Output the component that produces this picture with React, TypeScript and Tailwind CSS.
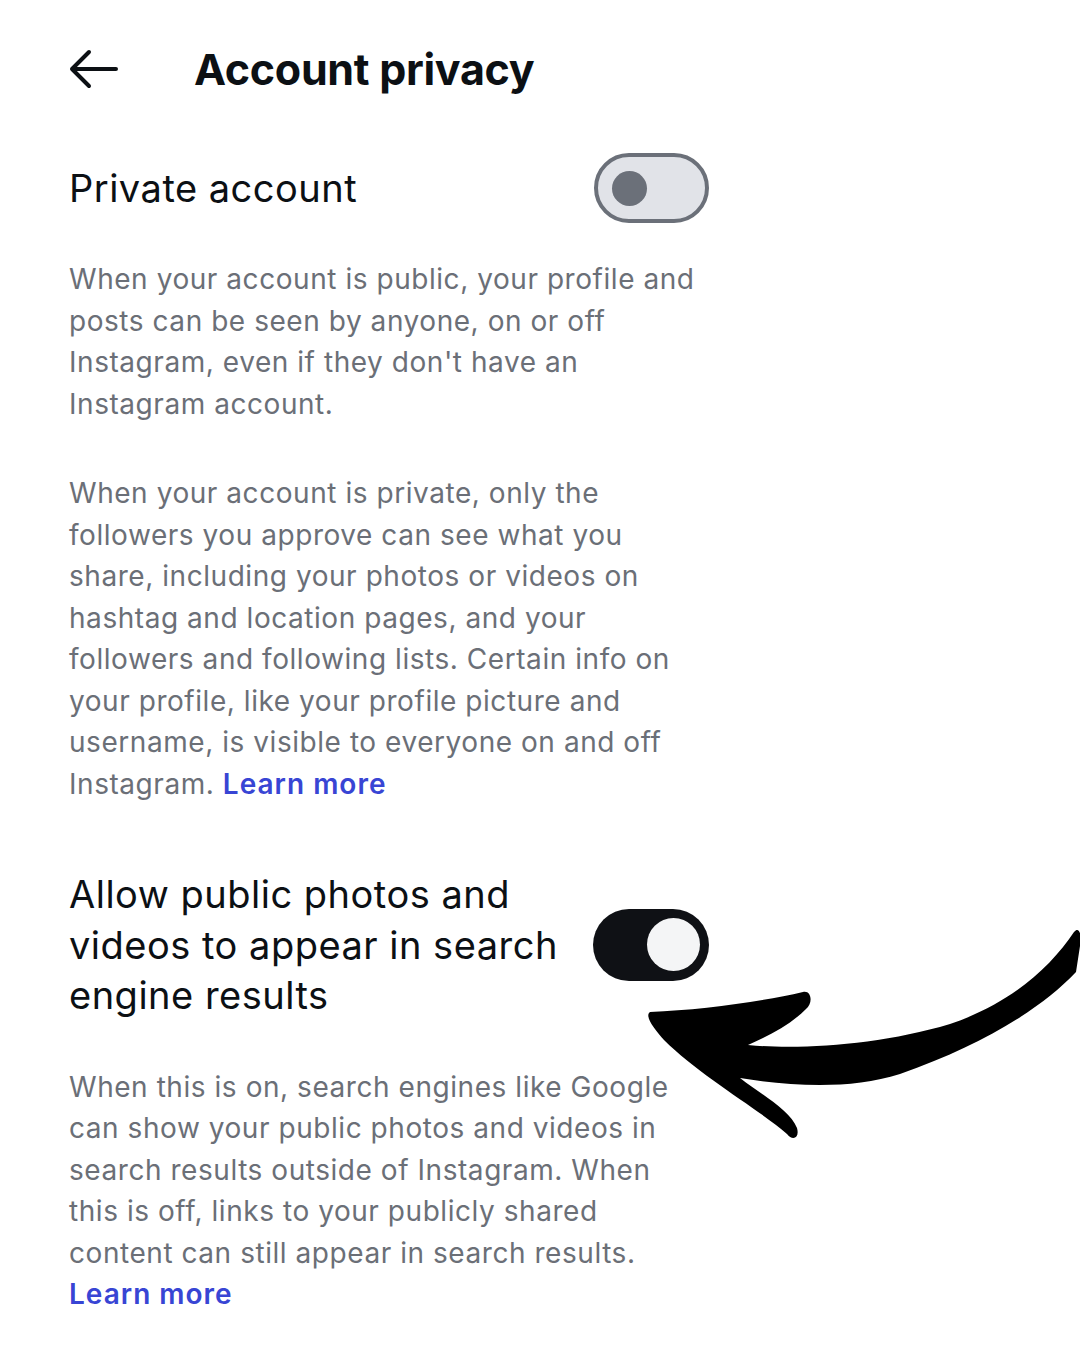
import React from "react";

const body = "text-[28px] leading-[41.5px] text-[#6b6f77] tracking-[0.55px]";
const heading = "text-[38px] text-[#0c1014] tracking-[0.5px]";
const link = "text-[#3845d4] font-semibold tracking-[1px]";

function BackArrow() {
  return (
    <svg width="52" height="40" viewBox="0 0 52 40" fill="none" className="block">
      <path
        d="M4 20 H48 M21 3 L4 20 L21 37"
        stroke="#0c1014"
        strokeWidth="4"
        strokeLinecap="round"
        strokeLinejoin="round"
      />
    </svg>
  );
}

function Toggle({ on }: { on: boolean }) {
  if (on) {
    return (
      <div className="w-[116px] h-[72px] rounded-full bg-[#0f1115] flex items-center justify-end pr-[9px] shrink-0">
        <div className="w-[53px] h-[53px] rounded-full bg-[#f4f5f6]" />
      </div>
    );
  }
  return (
    <div className="w-[115px] h-[70px] rounded-full bg-[#e1e3e8] border-[4px] border-[#6b7079] flex items-center pl-[14px] shrink-0">
      <div className="w-[35px] h-[35px] rounded-full bg-[#6b7079]" />
    </div>
  );
}

// hand-drawn pointer aimed at the search engine toggle
function CurvedArrow() {
  return (
    <svg
      width="440"
      height="225"
      viewBox="640 920 440 225"
      className="absolute left-[640px] top-[920px] pointer-events-none"
    >
      <path
        fill="#000"
        d="M650 1012
           C700 1010 760 1002 803 992
           C812 990 813 1004 806 1009
           C790 1025 770 1035 748 1045
           C800 1050 880 1045 950 1024
           C1010 1004 1050 968 1074 932
           C1079 926 1082 934 1080 946
           L1076 972
           C1040 1010 980 1046 900 1074
           C850 1090 790 1086 740 1078
           C762 1095 790 1110 797 1128
           C800 1139 792 1141 787 1134
           C760 1110 700 1076 664 1040
           C655 1030 644 1016 650 1012 Z"
      />
    </svg>
  );
}

export default function App() {
  return (
    <div
      className="relative w-[1080px] h-[1350px] bg-white overflow-hidden"
      style={{ fontFamily: "Inter, 'Noto Sans', sans-serif" }}
    >
      {/* header */}
      <div className="flex items-center h-[140px] pl-[68px] pb-[2px]">
        <BackArrow />
        <h1 className="ml-[74px] text-[43px] font-bold text-[#0c1014] tracking-[-0.3px]">Account privacy</h1>
      </div>

      <div className="ml-[69px] w-[640px]">
        {/* private account */}
        <div className="flex items-center justify-between mt-[13px]">
          <span className={heading}>Private account</span>
          <Toggle on={false} />
        </div>

        <p className={`${body} mt-[36px]`}>
          When your account is public, your profile and posts can be seen by anyone, on or off Instagram, even if they
          don't have an Instagram account.
        </p>

        <p className={`${body} mt-[48px]`}>
          When your account is private, only the followers you approve can see what you share, including your photos
          or videos on hashtag and location pages, and your followers and following lists. Certain info on your
          profile, like your profile picture and username, is visible to everyone on and off Instagram.{" "}
          <span className={link}>Learn more</span>
        </p>

        {/* search engine visibility */}
        <div className="flex items-center justify-between mt-[64px]">
          <span className={`${heading} leading-[50.5px] w-[500px]`}>
            Allow public photos and videos to appear in search engine results
          </span>
          <Toggle on={true} />
        </div>

        <p className={`${body} mt-[46px] w-[610px]`}>
          When this is on, search engines like Google can show your public photos and videos in search results outside
          of Instagram. When this is off, links to your publicly shared content can still appear in search results.{" "}
          <span className={link}>Learn more</span>
        </p>
      </div>

      <CurvedArrow />
    </div>
  );
}
